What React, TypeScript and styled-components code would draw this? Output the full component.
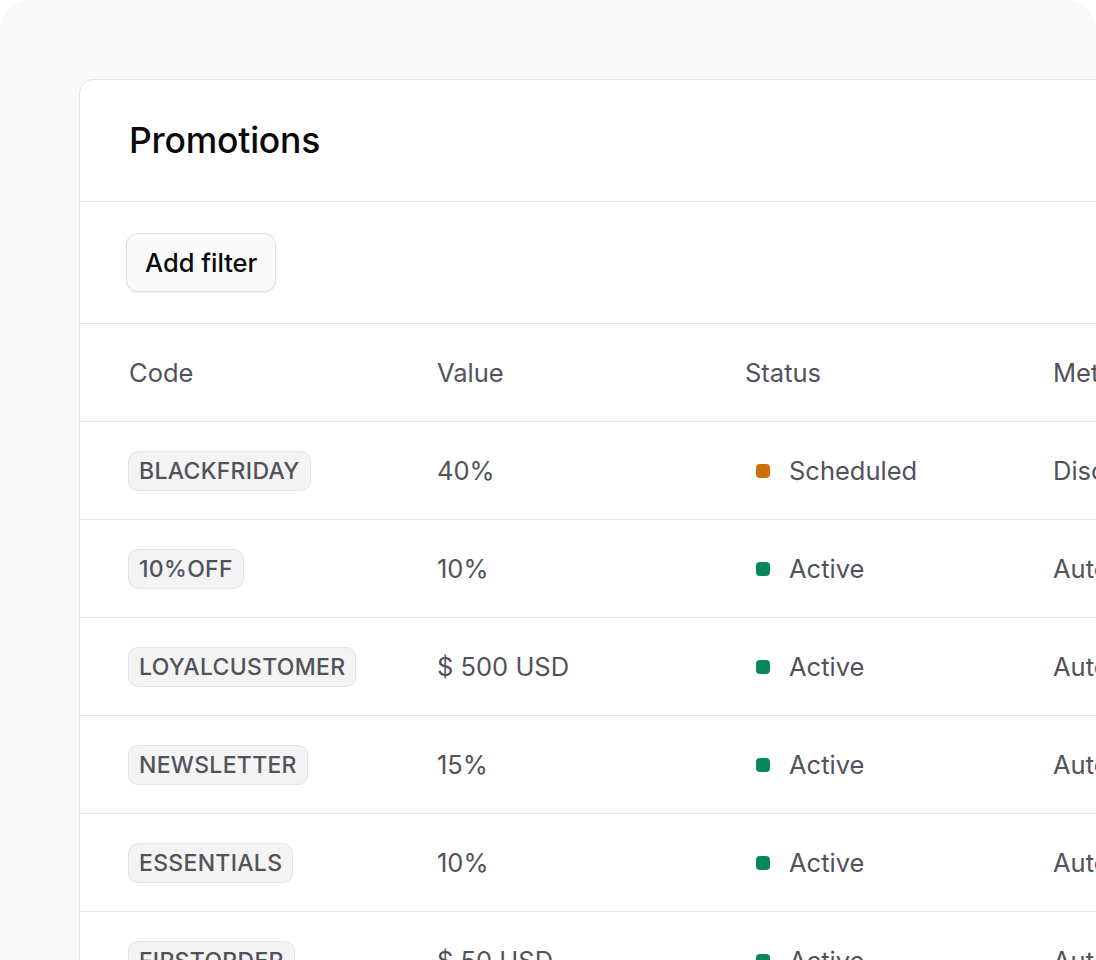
import React, { FC } from "react";
import styled, { createGlobalStyle } from "styled-components";

const GlobalStyle = createGlobalStyle`
    html, body {
        margin: 0;
        padding: 0;
        background: #ffffff;
    }
    body {
        font-family: Inter, "Noto Sans", "Liberation Sans", sans-serif;
        -webkit-font-smoothing: antialiased;
    }
`;

const Frame = styled.div`
    width: 1096px;
    height: 960px;
    box-sizing: border-box;
    background-color: #f9f9f9;
    border-radius: 32px 32px 0 0;
    padding: 79px 0 0 79px;
    overflow: hidden;
`;

const Card = styled.div`
    width: 1400px;
    background-color: #ffffff;
    border: 1px solid #e4e4e7;
    border-radius: 14px 0 0 0;
`;

const Header = styled.div`
    height: 121px;
    padding: 0 49px;
    display: flex;
    align-items: center;
    border-bottom: 1px solid #e4e4e7;
`;

const Title = styled.h1`
    margin: 0;
    font-size: 35.5px;
    font-weight: 500;
    color: #09090b;
    letter-spacing: -0.2px;
`;

const FilterBar = styled.div`
    height: 121px;
    padding: 0 47px;
    display: flex;
    align-items: center;
    border-bottom: 1px solid #e4e4e7;
`;

const FilterButton = styled.button`
    height: 57px;
    padding: 0 18px;
    border: none;
    border-radius: 11px;
    background-color: #fafafa;
    box-shadow: 0 0 0 1px #e0e0e3, 0 2px 3px rgba(0, 0, 0, 0.08);
    font-family: inherit;
    font-size: 25.5px;
    font-weight: 500;
    color: #09090b;
`;

const Table = styled.div`
    display: flex;
    flex-direction: column;
`;

const Row = styled.div`
    height: 97px;
    padding-left: 49px;
    display: grid;
    grid-template-columns: repeat(5, 308px);
    align-items: center;
    border-bottom: 1px solid #e4e4e7;
    font-size: 25.5px;
    font-weight: 400;
    color: #52525b;
`;

const Cell = styled.div`
    display: flex;
    align-items: center;
    white-space: nowrap;
`;

const CodeBadge = styled.span`
    height: 38px;
    padding: 0 10px;
    margin-left: -1px;
    display: inline-flex;
    align-items: center;
    background-color: #f4f4f5;
    border: 1px solid #e4e4e7;
    border-radius: 10px;
    font-size: 23px;
    font-weight: 500;
    color: #52525b;
    letter-spacing: 0.3px;
`;

const StatusDot = styled.span<{ $color: string }>`
    width: 14px;
    height: 14px;
    margin: 0 19px 0 11px;
    border-radius: 4px;
    background-color: ${(p) => p.$color};
`;

type Promotion = {
    code: string;
    value: string;
    status: "Active" | "Scheduled";
    method: string;
};

const promotions: Promotion[] = [
    { code: "BLACKFRIDAY", value: "40%", status: "Scheduled", method: "Discount code" },
    { code: "10%OFF", value: "10%", status: "Active", method: "Automatic" },
    { code: "LOYALCUSTOMER", value: "$ 500 USD", status: "Active", method: "Automatic" },
    { code: "NEWSLETTER", value: "15%", status: "Active", method: "Automatic" },
    { code: "ESSENTIALS", value: "10%", status: "Active", method: "Automatic" },
    { code: "FIRSTORDER", value: "$ 50 USD", status: "Active", method: "Automatic" },
];

const statusColors = {
    Active: "#08875e",
    Scheduled: "#cf6f0a",
};

const App: FC = () => {
    return (
        <>
            <GlobalStyle />
            <Frame>
                <Card>
                    <Header>
                        <Title>Promotions</Title>
                    </Header>
                    <FilterBar>
                        <FilterButton>Add filter</FilterButton>
                    </FilterBar>
                    <Table>
                        <Row>
                            <Cell>Code</Cell>
                            <Cell>Value</Cell>
                            <Cell>Status</Cell>
                            <Cell>Method</Cell>
                        </Row>
                        {promotions.map((promo) => (
                            <Row key={promo.code}>
                                <Cell>
                                    <CodeBadge>{promo.code}</CodeBadge>
                                </Cell>
                                <Cell>{promo.value}</Cell>
                                <Cell>
                                    <StatusDot $color={statusColors[promo.status]} />
                                    {promo.status}
                                </Cell>
                                <Cell>{promo.method}</Cell>
                            </Row>
                        ))}
                    </Table>
                </Card>
            </Frame>
        </>
    );
};

export default App;
